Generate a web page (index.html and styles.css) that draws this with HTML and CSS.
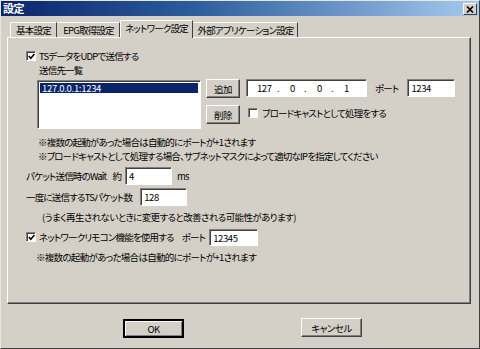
FILE: index.html
```html
<!DOCTYPE html>
<html lang="ja">

<head>
    <meta charset="UTF-8">
    <title>設定</title>
    <link rel="stylesheet" href="styles.css">
</head>

<body>
    <div class="window">
        <div class="titlebar">
            <span class="title">設定</span>
            <span class="close-btn">
                <svg width="8" height="7" viewBox="0 0 8 7"><path d="M1 0.5 L7 6.5 M7 0.5 L1 6.5" stroke="#000" stroke-width="1.6" /></svg>
            </span>
        </div>

        <div class="client">
            <div class="tabs">
                <div class="tab tab-basic">基本設定</div>
                <div class="tab tab-epg">EPG取得設定</div>
                <div class="tab tab-net active">ネットワーク設定</div>
                <div class="tab tab-ext">外部アプリケーション設定</div>
            </div>

            <div class="panel">
                <div class="row row-udp">
                    <span class="check checked">
                        <svg width="7" height="7" viewBox="0 0 7 7"><path d="M0.8 3 L2.8 5.2 L6.4 1" fill="none" stroke="#000" stroke-width="1.6" /></svg>
                    </span>
                    <span class="label">TSデータをUDPで送信する</span>
                </div>

                <div class="row row-dest">送信先一覧</div>

                <div class="dest-area">
                    <div class="listbox">
                        <div class="list-item selected">127.0.0.1:1234</div>
                    </div>
                    <div class="btn-col">
                        <button class="btn btn-small">追加</button>
                        <button class="btn btn-small">削除</button>
                    </div>
                    <div class="addr-col">
                        <div class="addr-row">
                            <div class="field ip-field">
                                <span class="oct">127</span><span class="dot">.</span>
                                <span class="oct">0</span><span class="dot">.</span>
                                <span class="oct">0</span><span class="dot">.</span>
                                <span class="oct">1</span>
                            </div>
                            <span class="port-label">ポート</span>
                            <div class="field port-field">1234</div>
                        </div>
                        <div class="bcast-row">
                            <span class="check"></span>
                            <span class="label">ブロードキャストとして処理をする</span>
                        </div>
                    </div>
                </div>

                <div class="note note-first">※複数の起動があった場合は自動的にポートが+1されます</div>
                <div class="note">※ブロードキャストとして処理する場合、サブネットマスクによって適切なIPを指定してください</div>

                <div class="row row-wait">
                    <span class="label">パケット送信時のWait</span>
                    <span class="approx">約</span>
                    <div class="field wait-field">4</div>
                    <span class="unit">ms</span>
                </div>

                <div class="row row-packets">
                    <span class="label">一度に送信するTSパケット数</span>
                    <div class="field packet-field">128</div>
                </div>

                <div class="note note-hint">(うまく再生されないときに変更すると改善される可能性があります)</div>

                <div class="row row-remote">
                    <span class="check checked">
                        <svg width="7" height="7" viewBox="0 0 7 7"><path d="M0.8 3 L2.8 5.2 L6.4 1" fill="none" stroke="#000" stroke-width="1.6" /></svg>
                    </span>
                    <span class="label">ネットワークリモコン機能を使用する</span>
                    <span class="port-label remote-port">ポート</span>
                    <div class="field remote-field">12345</div>
                </div>

                <div class="note note-last">※複数の起動があった場合は自動的にポートが+1されます</div>
            </div>

            <div class="footer">
                <button class="btn btn-wide btn-default">OK</button>
                <button class="btn btn-wide btn-cancel">キャンセル</button>
            </div>
        </div>
    </div>
</body>

</html>
```

FILE: styles.css
```css
* {
    box-sizing: border-box;
}

body {
    margin: 0;
    background-color: #d4d0c8;
    color: #000000;
    font-family: 'Noto Sans CJK JP', 'Liberation Sans', sans-serif;
    font-size: 9.5px;
    letter-spacing: -0.8px;
    font-feature-settings: "palt";
}

.window {
    width: 480px;
    height: 349px;
    background-color: #d4d0c8;
    border: 1px solid;
    border-color: #e8e6e0 #404040 #404040 #e8e6e0;
    overflow: hidden;
}

.titlebar {
    height: 15px;
    display: flex;
    align-items: center;
    justify-content: space-between;
    padding: 0 2px 0 2px;
    background: linear-gradient(to right, #0a246a, #2c5c9c 40%, #a6caf0);
}

.title {
    color: #ffffff;
    font-weight: bold;
    font-size: 11px;
    letter-spacing: -0.5px;
    line-height: 15px;
}

.close-btn {
    width: 14px;
    height: 12px;
    display: flex;
    align-items: center;
    justify-content: center;
    background-color: #d4d0c8;
    border: 1px solid;
    border-color: #ffffff #404040 #404040 #ffffff;
    margin-top: 1px;
}

.client {
    padding: 4px 8px 0 6px;
}

/* tabs */

.tabs {
    display: flex;
    align-items: flex-end;
    height: 17px;
    padding-left: 3px;
    position: relative;
    z-index: 1;
}

.tab {
    height: 15px;
    line-height: 14px;
    text-align: center;
    border: 1px solid;
    border-bottom: none;
    border-color: #ffffff #404040 transparent #ffffff;
    background-color: #d4d0c8;
    white-space: nowrap;
}

.tab-basic {
    width: 47px;
}

.tab-epg {
    width: 63px;
    border-left-color: #d4d0c8;
}

.tab-net {
    width: 73px;
}

.tab-ext {
    width: 105px;
    border-left-color: #d4d0c8;
}

.tab.active {
    height: 18px;
    margin-bottom: -1px;
    line-height: 15px;
}

/* panel */

.panel {
    width: 464px;
    height: 267px;
    border: 1px solid;
    border-color: #ffffff #404040 #404040 #ffffff;
    box-shadow: inset -1px -1px 0 #808080;
    padding: 12px 0 0 18px;
}

.row {
    display: flex;
    align-items: center;
    white-space: nowrap;
}

.row-udp {
    height: 12px;
}

.row-dest {
    height: 12px;
    margin-top: 2px;
    padding-left: 13px;
}

.check {
    width: 10px;
    height: 10px;
    flex: none;
    display: flex;
    align-items: center;
    justify-content: center;
    background-color: #ffffff;
    border: 1px solid;
    border-color: #808080 #ffffff #ffffff #808080;
    box-shadow: inset 1px 1px 0 #404040;
}

.row .check + .label {
    margin-left: 3px;
}

/* destination list */

.dest-area {
    display: flex;
    align-items: flex-start;
    margin-top: 3px;
}

.listbox {
    width: 164px;
    height: 49px;
    margin: 1px 0 0 11px;
    padding: 2px;
    background-color: #ffffff;
    border: 1px solid;
    border-color: #808080 #ffffff #ffffff #808080;
    box-shadow: inset 1px 1px 0 #404040;
}

.list-item {
    height: 10px;
    line-height: 10px;
    padding-left: 2px;
    letter-spacing: -0.3px;
}

.list-item.selected {
    background-color: #0a246a;
    color: #ffffff;
}

.btn-col {
    display: flex;
    flex-direction: column;
    gap: 7px;
    margin-left: 5px;
}

.btn {
    font-family: inherit;
    font-size: 9.5px;
    letter-spacing: -0.5px;
    font-feature-settings: "palt";
    color: #000000;
    padding: 0;
    background-color: #d4d0c8;
    border: 1px solid;
    border-color: #ffffff #404040 #404040 #ffffff;
    box-shadow: inset -1px -1px 0 #808080;
}

.btn-small {
    width: 34px;
    height: 19px;
}

.addr-col {
    margin-left: 6px;
}

.addr-row {
    display: flex;
    align-items: center;
    white-space: nowrap;
}

.field {
    height: 18px;
    line-height: 16px;
    padding-left: 3px;
    background-color: #ffffff;
    border: 1px solid;
    border-color: #808080 #ffffff #ffffff #808080;
    box-shadow: inset 1px 1px 0 #404040;
    white-space: nowrap;
    letter-spacing: -0.4px;
}

.ip-field {
    width: 121px;
    display: flex;
    padding-left: 10px;
}

.oct {
    width: 12px;
    text-align: left;
}

.ip-field .oct:first-child {
    width: 18px;
}

.dot {
    width: 15px;
    padding-left: 2px;
}

.port-label {
    margin-left: 8px;
}

.port-field {
    width: 48px;
    margin-left: 9px;
}

.bcast-row {
    display: flex;
    align-items: center;
    margin-top: 9px;
    margin-left: 2px;
    white-space: nowrap;
}

.bcast-row .label {
    margin-left: 4px;
}

/* notes and other settings */

.note {
    height: 14px;
    line-height: 14px;
    padding-left: 12px;
    white-space: nowrap;
}

.note-first {
    margin-top: 6px;
}

.row-wait {
    height: 18px;
    margin-top: 4px;
}

.approx {
    margin-left: 6px;
}

.wait-field {
    width: 47px;
    margin-left: 4px;
}

.unit {
    margin-left: 5px;
}

.row-packets {
    height: 18px;
    margin-top: 3px;
}

.packet-field {
    width: 47px;
    margin-left: 8px;
}

.note-hint {
    margin-top: 4px;
    padding-left: 16px;
    letter-spacing: -0.6px;
}

.row-remote {
    height: 18px;
    margin-top: 4px;
}

.remote-port {
    margin-left: 8px;
}

.remote-field {
    width: 49px;
    height: 17px;
    margin-left: 4px;
}

.note-last {
    margin-top: 4px;
    padding-left: 10px;
    letter-spacing: -0.7px;
}

/* footer buttons */

.footer {
    display: flex;
    margin-top: 15px;
    padding-left: 116px;
}

.btn-wide {
    width: 61px;
    height: 19px;
}

.btn-default {
    border-width: 2px;
    border-color: #000000;
    box-shadow: inset 1px 1px 0 #ffffff, inset -1px -1px 0 #808080;
}

.btn-cancel {
    margin-left: 117px;
    margin-top: -1px;
}
```
